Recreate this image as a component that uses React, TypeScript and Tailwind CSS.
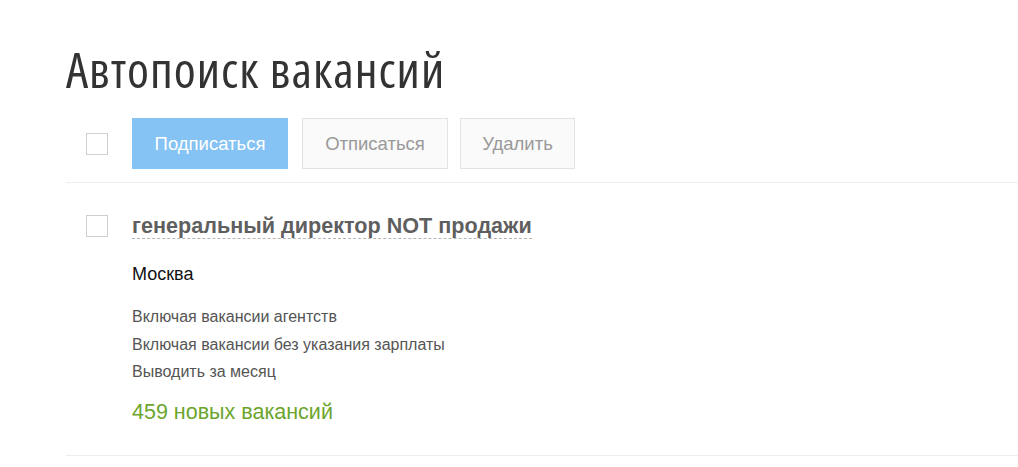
const Checkbox = () => (
  <span className="block w-[22px] h-[22px] border border-[#cfcfcf] bg-white" />
);

const filters = [
  "Включая вакансии агентств",
  "Включая вакансии без указания зарплаты",
  "Выводить за месяц",
];

export default function App() {
  return (
    <div className="min-h-[467px] bg-white pl-[66px] font-['Liberation_Sans',Arial,sans-serif]">
      <h1 className="pt-[43px] font-['Open_Sans',sans-serif] font-stretch-condensed font-normal text-[50px] leading-[53px] tracking-[1px] text-[#333]">
        Автопоиск вакансий
      </h1>

      <div className="mt-[22px] flex items-center h-[51px]">
        <div className="w-[66px] pl-[20px]">
          <Checkbox />
        </div>
        <div className="flex gap-[14px]">
          <button className="h-[51px] w-[156px] bg-[#85c3f4] text-white text-[18.5px]">
            Подписаться
          </button>
          <button className="h-[51px] w-[146px] border border-[#e3e3e3] bg-[#fafafa] text-[#999] text-[18.5px]">
            Отписаться
          </button>
          <button className="h-[51px] w-[115px] border border-[#e3e3e3] bg-[#fafafa] text-[#999] text-[18.5px] -ml-[2px]">
            Удалить
          </button>
        </div>
      </div>

      <div className="mt-[13px] border-t border-[#eeeeee]" />

      <div className="pt-[32px] pb-[27px] flex">
        <div className="w-[66px] pl-[20px]">
          <Checkbox />
        </div>
        <div>
          <a className="inline-block text-[21.6px] font-bold leading-[22px] text-[#5f5f5f] border-b border-dashed border-[#b5b5b5] pb-[1px]">
            генеральный директор NOT продажи
          </a>
          <div className="mt-[21px] text-[18px] text-[#111]">Москва</div>
          <div className="mt-[15px] text-[16px] leading-[27.5px] text-[#555]">
            {filters.map((f) => (
              <div key={f}>{f}</div>
            ))}
          </div>
          <div className="mt-[10px] text-[21.5px] text-[#6ba52c]">
            459 новых вакансий
          </div>
        </div>
      </div>

      <div className="border-t border-[#eeeeee]" />
    </div>
  );
}
